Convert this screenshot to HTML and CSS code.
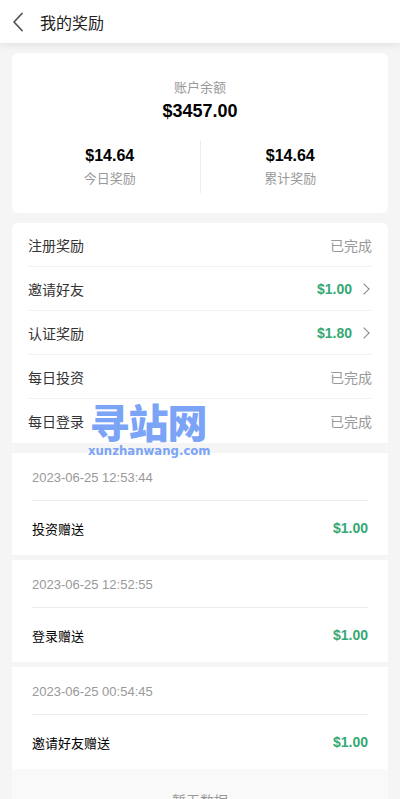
FILE: index.html
```html
<!DOCTYPE html>
<html lang="zh-CN">
<head>
  <meta charset="UTF-8">
  <title>我的奖励</title>
  <meta name="viewport" content="width=device-width,initial-scale=1">
  <link rel="stylesheet" href="styles.css">
</head>
<body>

<!-- Top bar -->
<header class="nav">
  <svg class="nav-back" width="12" height="20" viewBox="0 0 12 20">
    <path d="M10 1.5 L2 10 L10 18.5" fill="none" stroke="#555" stroke-width="1.8" stroke-linecap="round" stroke-linejoin="round"/>
  </svg>
  <span class="nav-title">我的奖励</span>
</header>

<main class="page">
  <!-- Balance summary -->
  <section class="card balance">
    <div class="balance-label">账户余额</div>
    <div class="balance-amount">$3457.00</div>
    <div class="stats">
      <div class="stat">
        <div class="stat-value">$14.64</div>
        <div class="stat-label">今日奖励</div>
      </div>
      <div class="stat">
        <div class="stat-value">$14.64</div>
        <div class="stat-label">累计奖励</div>
      </div>
    </div>
  </section>

  <!-- Reward tasks -->
  <section class="card tasks">
    <div class="task"><span>注册奖励</span><span class="done">已完成</span></div>
    <div class="task"><span>邀请好友</span><span class="amount">$1.00<i class="chev"></i></span></div>
    <div class="task"><span>认证奖励</span><span class="amount">$1.80<i class="chev"></i></span></div>
    <div class="task"><span>每日投资</span><span class="done">已完成</span></div>
    <div class="task"><span>每日登录</span><span class="done">已完成</span></div>
  </section>

  <!-- Reward history -->
  <section class="records">
    <div class="record">
      <div class="record-date">2023-06-25 12:53:44</div>
      <div class="record-row"><span>投资赠送</span><span class="money">$1.00</span></div>
    </div>
    <div class="record">
      <div class="record-date">2023-06-25 12:52:55</div>
      <div class="record-row"><span>登录赠送</span><span class="money">$1.00</span></div>
    </div>
    <div class="record">
      <div class="record-date">2023-06-25 00:54:45</div>
      <div class="record-row"><span>邀请好友赠送</span><span class="money">$1.00</span></div>
    </div>
    <div class="empty">暂无数据</div>
  </section>
</main>

<!-- Watermark overlay -->
<div class="watermark">
  <div class="wm-big">寻站网</div>
  <div class="wm-small">xunzhanwang.com</div>
</div>

</body>
</html>
```

FILE: styles.css
```css
:root {
  --bg: #f5f5f5;
  --text-main: #222;
  --text-muted: #999;
  --green: #35a874;
  --line: #f1f1f1;
}
html, body {
  margin: 0;
  padding: 0;
  background: var(--bg);
  font-family: "Liberation Sans", "Noto Sans CJK SC", sans-serif;
  color: var(--text-main);
  overflow: hidden;
}
body { position: relative; }

/* Top bar */
.nav {
  height: 43px;
  background: #fff;
  display: flex;
  align-items: center;
  padding-left: 12px;
  box-shadow: 0 2px 8px rgba(0,0,0,0.08);
  position: relative;
  z-index: 1;
}
.nav-back { margin-right: 16px; }
.nav-title {
  font-size: 16px;
  color: #222;
}

.page { padding: 10px 12px 0; }
.card {
  background: #fff;
  border-radius: 6px;
}

/* Balance */
.balance {
  padding: 26px 0 20px;
  text-align: center;
}
.balance-label {
  font-size: 13px;
  line-height: 18px;
  color: var(--text-muted);
}
.balance-amount {
  font-size: 18px;
  font-weight: 700;
  line-height: 24px;
  margin-top: 2px;
  color: #000;
}
.stats {
  display: flex;
  margin-top: 18px;
  padding: 0 8px;
}
.stat {
  flex: 1;
  padding-top: 4px;
  height: 48px;
}
.stat + .stat { border-left: 1px solid #ececec; }
.stat-value {
  font-size: 16px;
  font-weight: 700;
  line-height: 22px;
  color: #000;
}
.stat-label {
  font-size: 13px;
  line-height: 20px;
  margin-top: 2px;
  color: var(--text-muted);
}

/* Tasks */
.tasks {
  margin-top: 10px;
  padding: 0 16px;
  border-radius: 6px 6px 0 0;
}
.task {
  height: 43px;
  display: flex;
  align-items: center;
  justify-content: space-between;
  font-size: 14px;
  color: #333;
}
.task + .task { border-top: 1px solid var(--line); }
.task:last-child { height: 44px; }
.done { color: var(--text-muted); }
.amount {
  color: var(--green);
  font-weight: 700;
  display: flex;
  align-items: center;
}
.chev {
  width: 7px;
  height: 7px;
  border-top: 1.3px solid #888;
  border-right: 1.3px solid #888;
  transform: rotate(45deg);
  margin: 0 4px 0 8px;
}

/* Records */
.records { margin-top: 10px; }
.record {
  background: #fff;
  padding: 0 20px;
  margin-bottom: 5px;
  height: 102px;
  box-sizing: border-box;
}
.record:nth-child(3) { margin-bottom: 0; }
.record-date {
  font-size: 13px;
  line-height: 18px;
  color: var(--text-muted);
  padding: 16px 0 13px;
  border-bottom: 1px solid #ebebeb;
}
.record-row {
  display: flex;
  justify-content: space-between;
  align-items: center;
  height: 54px;
  font-size: 13px;
  color: #000;
}
.money {
  color: var(--green);
  font-weight: 700;
  font-size: 14px;
}
.empty {
  background: #f9f9f9;
  text-align: center;
  padding: 22px 0 30px;
  font-size: 14px;
  line-height: 20px;
  color: var(--text-muted);
}

/* Watermark */
.watermark {
  position: absolute;
  left: 88px;
  top: 399px;
  width: 120px;
  color: #7ba4f6;
  text-align: center;
  pointer-events: none;
}
.wm-big {
  font-family: "Noto Sans CJK SC", sans-serif;
  font-size: 40px;
  font-weight: 900;
  line-height: 44px;
  letter-spacing: -1px;
}
.wm-small {
  font-family: "DejaVu Sans Condensed", "DejaVu Sans", sans-serif;
  font-weight: 700;
  font-size: 13px;
  line-height: 14px;
  margin-top: 1px;
}
```
